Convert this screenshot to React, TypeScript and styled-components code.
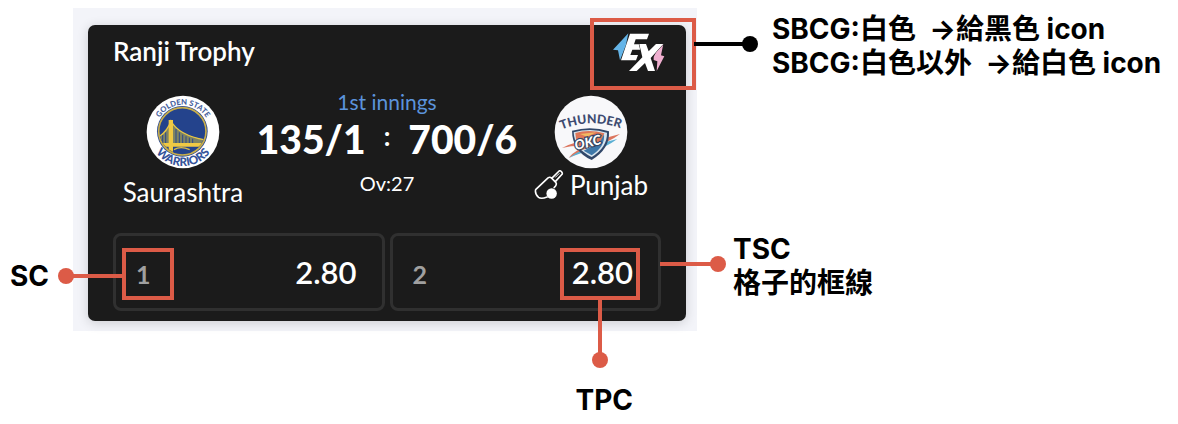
import React from "react";
import styled, { createGlobalStyle, css } from "styled-components";

const RED = "#dc5b47";

const GlobalStyle = createGlobalStyle`
  *, *::before, *::after { box-sizing: border-box; }
  body { margin: 0; background: #fff; }
`;

const Page = styled.main`
  display: grid;
  grid-template-columns: 73px minmax(0, 624px) minmax(0, 1fr);
  padding: 8px 0;
  font-family: Inter, "Noto Sans CJK TC", sans-serif;
  font-size: 28px;
  font-weight: 700;
  line-height: 34px;
  color: #000;
`;

const Note = styled.p`
  margin: 0;
  white-space: pre;
`;

const LeftNotes = styled.aside`
  padding: 251px 0 0 10px;
`;

const RightNotes = styled.aside`
  display: flex;
  flex-direction: column;
  gap: 152px;
  padding-top: 4px;
`;

const IconNotes = styled.div`
  padding-left: 75px;
`;

const BorderNotes = styled.div`
  padding-left: 36px;
`;

const BottomNotes = styled.aside`
  grid-column: 2;
  display: flex;
  justify-content: flex-end;
  padding: 52px 64px 0 0;
`;

const Frame = styled.section`
  padding: 17px 11px 10px 15px;
  background: #f3f4f9;
`;

const Card = styled.article`
  padding: 0 25px 10px;
  border-radius: 7px;
  background: #1b1b1b;
  box-shadow: 0 2px 12px rgba(0, 0, 0, 0.16);
  color: #fff;
  font-family: Lato, "Open Sans", sans-serif;
  font-weight: 400;
`;

const CardHeader = styled.header`
  display: flex;
  justify-content: space-between;
  align-items: center;
  height: 54px;
`;

const League = styled.h1`
  margin: 0;
  padding-bottom: 2px;
  font-size: 26px;
  font-weight: 600;
  line-height: 30px;
`;

const Brand = styled.div`
  position: relative;
  display: flex;
  margin-right: -5px;
`;

/* Outline drawn over the part that a note points to. */
const Marker = styled.span<{ $wide?: boolean }>`
  position: absolute;
  inset: ${(p) => (p.$wide ? "-12px -30px -16px -20px" : "0")};
  border: 4px solid ${RED};
`;

type Side = "left" | "right" | "down";

const sides = {
  left: css`
    right: 100%;
    top: 22px;
    height: 4px;
    &::after { left: -8px; top: -6px; }
  `,
  right: css`
    left: calc(100% + 2px);
    top: 20px;
    height: 4px;
    &::after { right: -8px; top: -6px; }
  `,
  down: css`
    top: 100%;
    left: 50%;
    width: 4px;
    margin-left: -2px;
    &::after { bottom: -8px; left: -6px; }
  `,
};

const Lead = styled.span<{ $side: Side; $length: number; $color?: string }>`
  position: absolute;
  background: ${(p) => p.$color ?? RED};
  ${(p) => sides[p.$side]}
  ${(p) => (p.$side === "down" ? "height" : "width")}: ${(p) => p.$length}px;
  &::after {
    content: "";
    position: absolute;
    width: 16px;
    height: 16px;
    border-radius: 50%;
    background: inherit;
  }
`;

const Match = styled.div`
  display: grid;
  grid-template-columns: 140px minmax(0, 1fr) 140px;
  height: 154px;
  padding-top: 16px;
`;

const Team = styled.div`
  display: flex;
  flex-direction: column;
  align-items: center;
`;

const TeamName = styled.h2<{ $low?: boolean }>`
  display: flex;
  align-items: center;
  gap: 6px;
  margin: 0;
  padding-top: ${(p) => (p.$low ? "8px" : "1px")};
  font-size: 26px;
  font-weight: 400;
  line-height: 30px;
`;

const Scoreboard = styled.div`
  display: flex;
  flex-direction: column;
  align-items: center;
  margin-top: -5px;
  white-space: nowrap;
`;

const Innings = styled.p`
  margin: 0;
  color: #5b93dc;
  font-size: 21px;
  line-height: 24px;
`;

const Score = styled.p`
  display: flex;
  align-items: center;
  justify-content: center;
  gap: 18px;
  margin: 0;
  font-size: 39px;
  font-weight: 900;
  line-height: 50px;
`;

const Colon = styled.span`
  padding-bottom: 6px;
  font-size: 26px;
  font-weight: 700;
  line-height: 40px;
`;

const Overs = styled.p`
  margin: 0;
  padding-top: 7px;
  font-size: 20px;
  line-height: 24px;
`;

const Odds = styled.div`
  display: grid;
  grid-template-columns: 1fr 1fr;
  gap: 5px;
`;

const OddsButton = styled.button`
  position: relative;
  display: flex;
  justify-content: space-between;
  padding: 12px 18px 8px 6px;
  border: 3px solid #303030;
  border-radius: 8px;
  background: transparent;
  color: #fff;
  font-family: inherit;
  cursor: pointer;
`;

const Pick = styled.span`
  position: relative;
  width: 52px;
  padding-left: 14px;
  color: #a0a0a0;
  font-size: 25px;
  font-weight: 700;
  line-height: 52px;
  text-align: left;
`;

const Price = styled.span`
  position: relative;
  width: 80px;
  height: 52px;
  padding-right: 7px;
  font-size: 31px;
  font-weight: 600;
  line-height: 48px;
  text-align: right;
`;

const BorderLead = styled(Lead)`
  top: 26px;
`;

const ExLogo = () => (
  <svg width="56" height="44" viewBox="90 60 168 132" role="img" aria-label="EX">
    <path d="M145 70 L99 119 L114 121 L120 151 L138 104 Z" fill="#65b5e8" />
    <path d="M250 102 L232 118 L221 141 L221 150 L232 154 L230 183 L253 139 L243 136 Z" fill="#f0afd0" />
    <path d="M150 71 H207 L201 88 H167 L162 103 H190 L184 119 H157 L151 135 H174 L168 151 H123 Z" fill="#fff" />
    <path d="M178 102 H198 L206 124 L228 102 H250 L212 144 L225 183 H204 L195 159 L170 183 H147 L187 142 Z" fill="#fff" stroke="#1b1b1b" strokeWidth="3" paintOrder="stroke" />
  </svg>
);

const WarriorsLogo = () => (
  <svg width="74" height="74" viewBox="46 30 222 222" role="img" aria-label="Golden State Warriors">
    <defs>
      <path id="gsw-top" d="M75 141 A82 82 0 0 1 239 141" />
      <path id="gsw-bottom" d="M55 141 A102 102 0 0 0 259 141" />
      <clipPath id="gsw-disc"><circle cx="155" cy="139" r="68" /></clipPath>
    </defs>
    <circle cx="157" cy="141" r="109" fill="#fff" />
    <circle cx="155" cy="139" r="76" fill="#274690" />
    <circle cx="155" cy="139" r="71" fill="#24438c" stroke="#c9ae4a" strokeWidth="5" />
    <g clipPath="url(#gsw-disc)">
      <path d="M84 154 Q110 138 121 108 Q145 151 226 164 V174 H84 Z" fill="#7f8463" />
      <path d="M96 150V174M105 142V174M136 132V174M146 142V174M156 149V174M166 154V174M176 158V174M186 161V174" stroke="#2d498a" strokeWidth="3" />
      <path d="M84 156 Q110 139 121 108 Q145 152 226 165" fill="none" stroke="#e9c743" strokeWidth="4" />
      <path d="M80 174H230V185H80Z" fill="#f0c944" />
      <path d="M114 105H127V210H114Z" fill="#f0c944" />
      <path d="M95 188Q106 180 112 197M130 194Q150 182 177 194" fill="none" stroke="#d9bb4c" strokeWidth="4" />
    </g>
    <text fill="#46619e" fontFamily="Lato, sans-serif" fontSize="23" fontWeight="900">
      <textPath href="#gsw-top" startOffset="50%" textAnchor="middle">GOLDEN STATE</textPath>
    </text>
    <text fill="#34539a" fontFamily="Lato, sans-serif" fontSize="35" fontWeight="900">
      <textPath href="#gsw-bottom" startOffset="50%" textAnchor="middle">WARRIORS</textPath>
    </text>
  </svg>
);

const ThunderLogo = () => (
  <svg width="74" height="74" viewBox="88 28 222 222" role="img" aria-label="Oklahoma City Thunder">
    <defs>
      <path id="okc-arc" d="M100 136 Q199 92 298 132" />
    </defs>
    <circle cx="199" cy="139" r="109" fill="#f8f8fa" />
    <path d="M112 187 Q155 165 202 164 Q245 158 286 145 Q254 169 217 178 L132 216 Q155 190 188 181 Q147 178 112 187Z" fill="#dc765e" />
    <path d="M132 218 Q155 198 188 190 L240 170 L278 160 Q243 185 210 195 Q166 199 132 218Z" fill="#5bafd3" />
    <path d="M142 135 Q199 119 253 137 Q256 190 201 223 Q143 197 142 135Z" fill="#314769" />
    <path d="M147 140 Q199 126 247 141 Q248 185 201 214 Q149 190 147 140Z" fill="#d7e4ee" />
    <path d="M152 142 Q193 130 239 143 L228 172 L171 194 Q153 170 152 142Z" fill="#df7658" />
    <path d="M238 146 Q242 183 201 209 L177 195 L226 169Z" fill="#3e78a9" />
    <path d="M166 145 L214 140 L187 153 Z" fill="#f1ba62" />
    <text transform="rotate(-13 190 173)" x="190" y="184" textAnchor="middle" fill="#fff" stroke="#344764" strokeWidth="7" paintOrder="stroke" fontFamily="Lato, sans-serif" fontSize="40" fontStyle="italic" fontWeight="900">OKC</text>
    <text fill="#3d4b70" fontFamily="Lato, sans-serif" fontSize="37" fontWeight="900">
      <textPath href="#okc-arc" startOffset="50%" textAnchor="middle">THUNDER</textPath>
    </text>
  </svg>
);

const BatIcon = () => (
  <svg width="30" height="30" viewBox="22 251 92 92" fill="none" stroke="#fff" strokeWidth="5" strokeLinecap="round" strokeLinejoin="round" aria-hidden="true">
    <path d="M62 334 Q44 341 36 335 Q24 325 27 311 L65 275 Q71 271 76 276 L88 288 Q93 293 88 300 L84 305" />
    <path d="M77 276 L99 254 Q103 252 107 257 Q110 261 108 264 L88 286" />
    <path d="M88 273 L99 262" strokeWidth="3" />
    <circle cx="76" cy="323" r="16" fill="#fff" stroke="none" />
  </svg>
);

export default function App() {
  return (
    <>
      <GlobalStyle />
      <Page>
        <LeftNotes>
          <Note>SC</Note>
        </LeftNotes>
        <Frame>
          <Card>
            <CardHeader>
              <League>Ranji Trophy</League>
              <Brand>
                <ExLogo />
                <Marker $wide>
                  <Lead $side="right" $length={56} $color="#000" />
                </Marker>
              </Brand>
            </CardHeader>
            <Match>
              <Team>
                <WarriorsLogo />
                <TeamName $low>Saurashtra</TeamName>
              </Team>
              <Scoreboard>
                <Innings>1st innings</Innings>
                <Score>
                  <span>135/1</span>
                  <Colon>:</Colon>
                  <span>700/6</span>
                </Score>
                <Overs>Ov:27</Overs>
              </Scoreboard>
              <Team>
                <ThunderLogo />
                <TeamName>
                  <BatIcon />
                  Punjab
                </TeamName>
              </Team>
            </Match>
            <Odds>
              <OddsButton type="button">
                <Pick>
                  1
                  <Marker>
                    <Lead $side="left" $length={60} />
                  </Marker>
                </Pick>
                <Price>2.80</Price>
              </OddsButton>
              <OddsButton type="button">
                <Pick>2</Pick>
                <Price>
                  2.80
                  <Marker>
                    <Lead $side="down" $length={64} />
                  </Marker>
                </Price>
                <BorderLead $side="right" $length={58} />
              </OddsButton>
            </Odds>
          </Card>
        </Frame>
        <RightNotes>
          <IconNotes>
            <Note>SBCG:白色  →給黑色 icon</Note>
            <Note>SBCG:白色以外  →給白色 icon</Note>
          </IconNotes>
          <BorderNotes>
            <Note>TSC</Note>
            <Note>格子的框線</Note>
          </BorderNotes>
        </RightNotes>
        <BottomNotes>
          <Note>TPC</Note>
        </BottomNotes>
      </Page>
    </>
  );
}
